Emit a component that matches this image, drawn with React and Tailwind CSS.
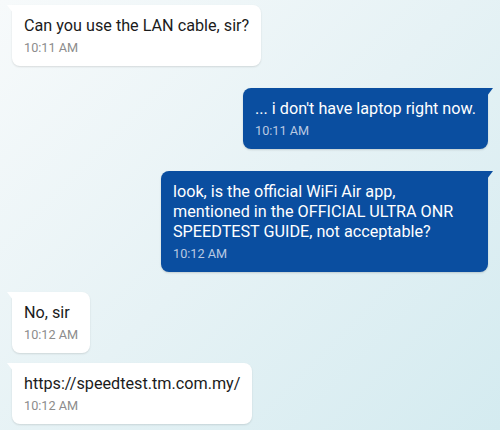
import React from "react";

function TailLeft() {
  return (
    <svg className="absolute top-0 left-[-5px]" width="6" height="8" viewBox="0 0 6 8">
      <path d="M0 0 L6 0 L6 8 Z" fill="#ffffff" />
    </svg>
  );
}

function TailRight() {
  return (
    <svg className="absolute top-0 right-[-5px]" width="6" height="8" viewBox="0 0 6 8">
      <path d="M0 0 L6 0 L0 8 Z" fill="#0a4ea0" />
    </svg>
  );
}

function Incoming({ children, time }) {
  return (
    <div className="flex justify-start pl-3">
      <div className="relative bg-white rounded-lg rounded-tl-none px-3 pt-[11px] pb-[10px] shadow-[0_1px_2px_rgba(0,0,0,0.12)]">
        <TailLeft />
        <div className="text-[16.2px] leading-[20px] text-[#1b1b1b]">{children}</div>
        <div className="mt-[4px] text-[12.7px] leading-[16px] text-[#8c8c8c]">{time}</div>
      </div>
    </div>
  );
}

function Outgoing({ children, time, w }) {
  return (
    <div className="flex justify-end pr-3">
      <div className={"relative bg-[#0a4ea0] rounded-lg rounded-tr-none px-3 pt-[11px] pb-[10px] shadow-[0_1px_2px_rgba(0,0,0,0.15)] " + (w || "")}>
        <TailRight />
        <div className="text-[16.2px] leading-[20px] text-white">{children}</div>
        <div className="mt-[4px] text-[12.7px] leading-[16px] text-[#b9c9e2]">{time}</div>
      </div>
    </div>
  );
}

export default function App() {
  return (
    <div
      className="w-[500px] h-[430px] overflow-hidden bg-[linear-gradient(135deg,#f7fafb_0%,#e6f2f5_50%,#d4ebf0_100%)] pt-[5px] flex flex-col"
      style={{ fontFamily: "Roboto, 'Noto Sans', sans-serif" }}
    >
      <Incoming time="10:11 AM">Can you use the LAN cable, sir?</Incoming>
      <div className="h-[22px] shrink-0" />
      <Outgoing time="10:11 AM">... i don't have laptop right now.</Outgoing>
      <div className="h-[22px] shrink-0" />
      <Outgoing time="10:12 AM" w="w-[327px]">
        look, is the official WiFi Air app,
        <br />
        mentioned in the OFFICIAL ULTRA ONR
        <br />
        SPEEDTEST GUIDE, not acceptable?
      </Outgoing>
      <div className="h-[20px] shrink-0" />
      <Incoming time="10:12 AM">No, sir</Incoming>
      <div className="h-[10px] shrink-0" />
      <Incoming time="10:12 AM">https://speedtest.tm.com.my/</Incoming>
    </div>
  );
}
